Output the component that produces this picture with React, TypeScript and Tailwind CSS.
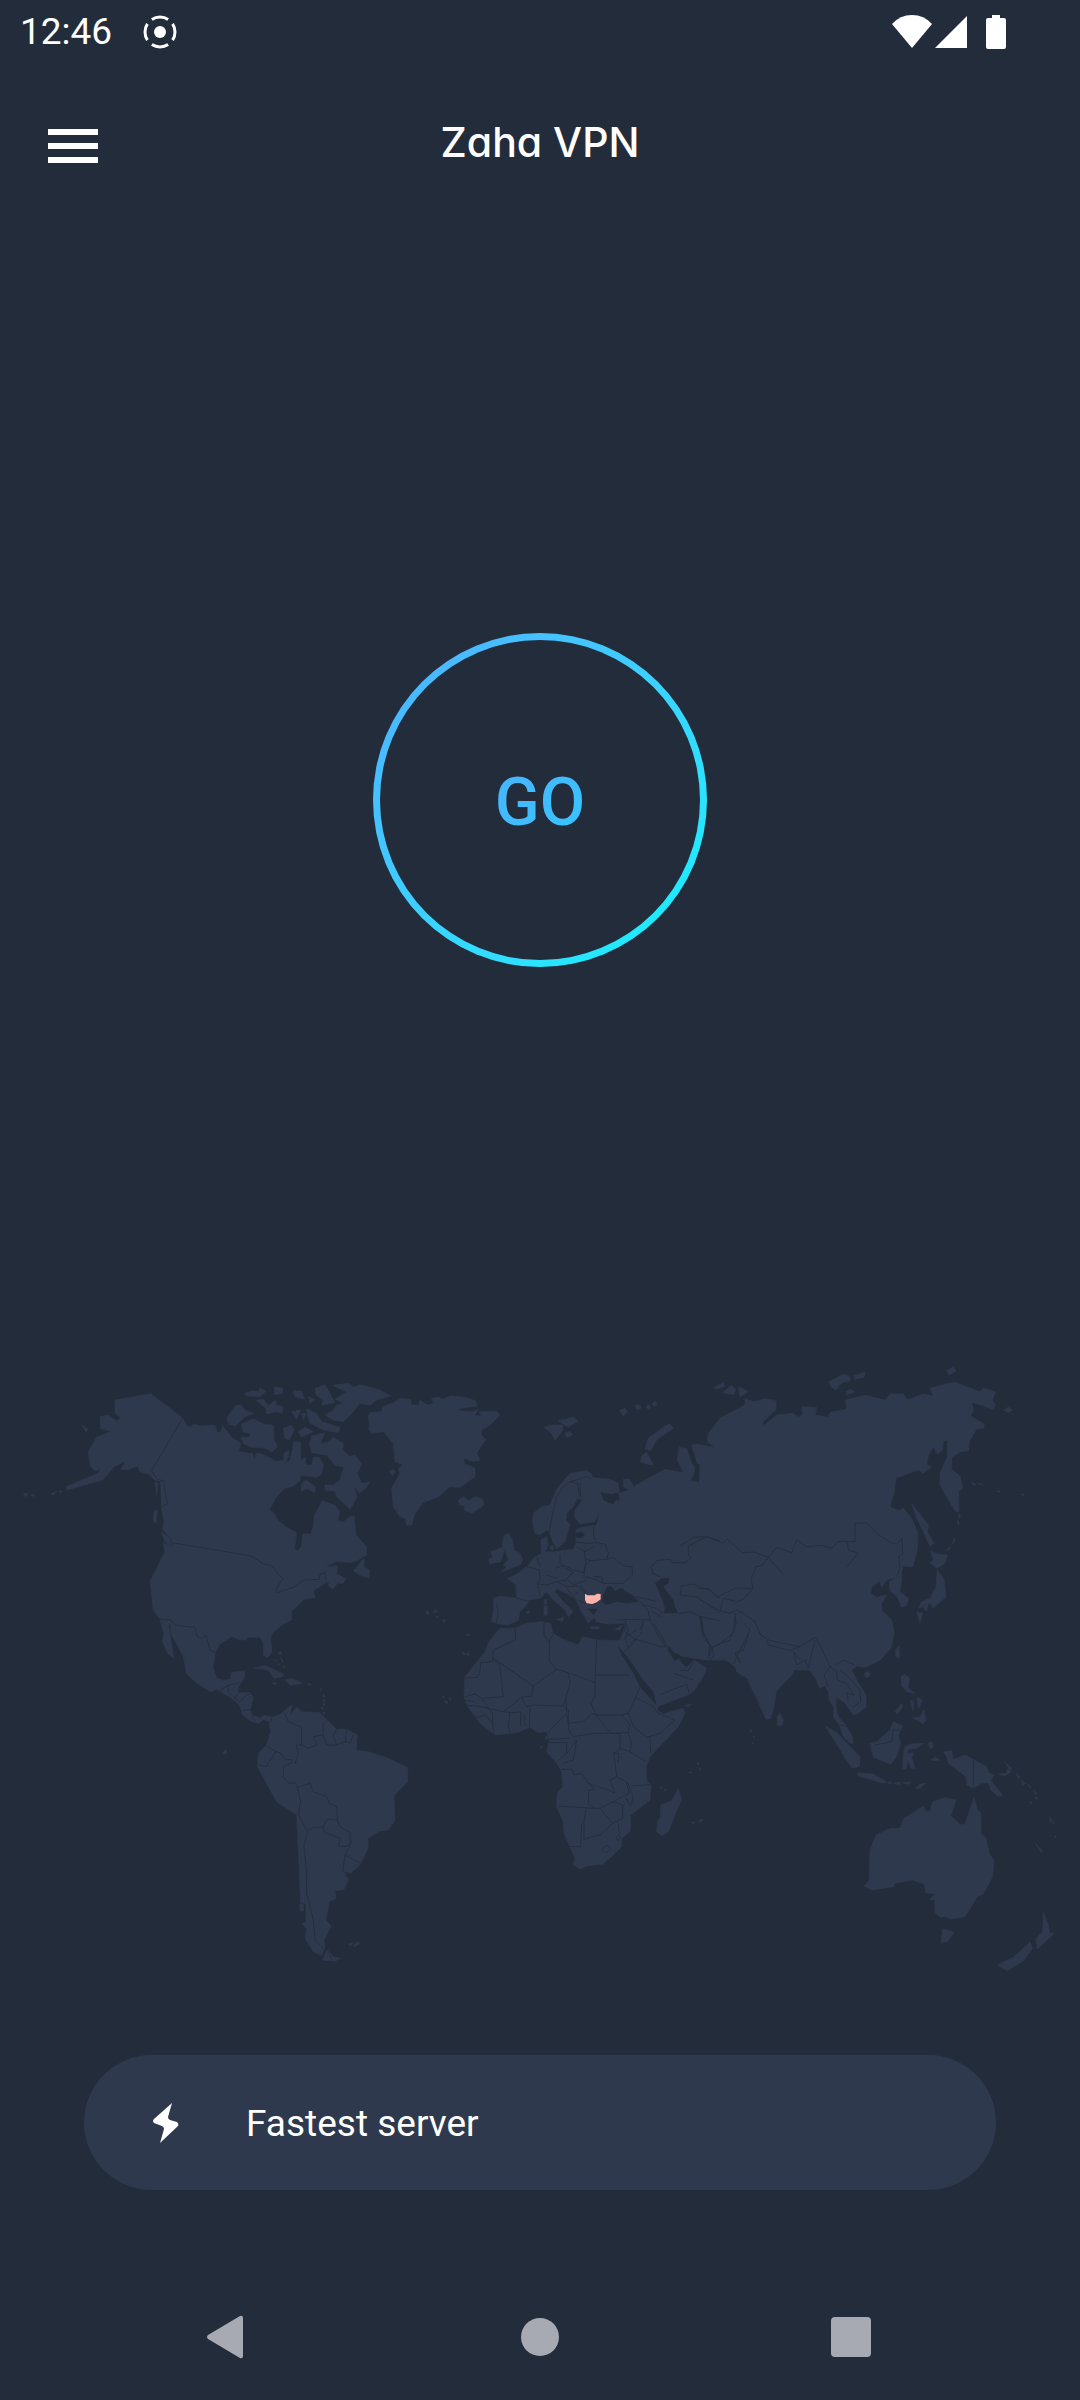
import React from "react";

interface MapRegion {
  id: string;
  x: number;
  y: number;
  land: string;
  seas?: string;
  borders?: string;
}

const LAND = "#2f394d";
const SEA = "#232c3b";

// Every region is drawn in its own local coordinates and then moved into place
const regions: MapRegion[] = [
  {
    id: "north-america",
    x: 0,
    y: 0,
    land: `M345,150 L452,131 L548,204 L562,230 L574,230 L580,222 L600,228 L645,226 L652,248 L662,246 L668,228 L695,262 L722,280 L716,304 L758,312 L762,330 L770,308 L790,314 L830,334 L850,330 L852,310 L866,302 L866,320 L854,344 L870,330 L882,276 L902,276 L902,330 L916,322 L918,345 L936,345 L940,322 L958,322 L970,345 L965,372 L950,382 L900,376 L900,392 L880,408 L855,415 L830,440 L808,478 L822,490 L835,512 L860,532 L890,548 L884,598 L894,602 L905,590 L908,552 L932,552 L940,530 L942,500 L966,452 L1005,466 L1018,484 L1014,512 L1030,516 L1050,500 L1062,498 L1068,555 L1100,592 L1100,615 L1070,632 L1055,638 L1010,634 L975,650 L1012,648 L1010,672 L1038,686 L1030,700 L1012,700 L998,718 L985,708 L988,698 L975,700 L940,722 L945,742 L912,748 L875,785 L875,810 L850,822 L818,848 L812,865 L815,905 L803,922 L790,915 L790,880 L782,862 L740,862 L738,870 L715,868 L695,860 L660,880 L645,905 L638,960 L558,960 L550,920 L515,850 L512,820 L505,822 L520,925 L505,910 L488,875 L492,850 L480,808 L470,795 L460,780 L450,695 L495,605 L490,580 L515,590 L515,568 L488,540 L492,510 L485,480 L482,395 L465,390 L445,372 L418,364 L414,348 L382,360 L362,358 L378,332 L340,352 L308,390 L200,420 L198,410 L295,370 L302,356 L285,362 L272,350 L264,305 L290,262 L335,244 L302,236 L300,200 L325,195 L350,214 L362,205 L345,188Z
      M724,222 L760,206 L795,224 L820,225 L822,270 L832,290 L815,306 L795,294 L755,292 L730,280 L722,262 L748,262 L752,252 L728,244Z
      M680,205 L705,168 L722,164 L735,180 L762,190 L735,200 L705,228 L685,222Z
      M735,130 L760,122 L775,126 L780,114 L798,124 L780,140 L740,138Z
      M822,112 L848,114 L848,130 L824,134Z
      M768,150 L790,148 L805,168 L825,150 L830,165 L850,170 L845,190 L830,185 L800,192 L798,175Z
      M880,122 L905,124 L914,148 L885,140Z M925,138 L944,150 L930,160Z
      M945,115 L975,104 L1005,158 L965,165 L970,150 L948,135Z
      M875,185 L902,180 L890,208Z M905,190 L918,192 L910,210Z
      M918,176 L950,190 L965,215 L1020,232 L1015,248 L970,240 L930,220Z
      M850,235 L875,226 L882,240 L868,270 L855,265Z
      M895,245 L915,232 L940,245 L905,262Z
      M998,106 L1045,100 L1060,112 L1080,104 L1140,120 L1172,138 L1130,150 L1110,166 L1080,160 L1060,185 L1030,215 L1000,210 L975,195 L1000,180 L1010,165 L1030,160 L1005,148 L1040,125Z
      M935,258 L975,248 L960,282 L985,275 L1000,262 L1030,280 L1028,300 L1050,320 L1065,315 L1085,342 L1072,370 L1085,400 L1108,396 L1100,412 L1078,430 L1060,408 L1072,440 L1050,478 L1010,440 L1005,424 L975,420 L975,405 L1000,405 L1020,390 L1032,352 L1005,345 L980,315 L935,308 L928,280Z
      M904,402 L918,390 L948,412 L944,428 L922,416 L904,424Z
      M1060,662 L1092,625 L1092,650 L1108,660 L1108,684 L1080,676Z
      M484,546 L510,565 L512,590 L495,575Z M462,485 L472,480 L468,520 L460,515Z M465,395 L475,400 L470,434Z
      M246,226 L264,238 L258,246Z M72,430h10v8h-10z M92,434l12,-2l-4,8z M152,432l18,-8l-12,12z M176,424h12l-8,6z`,
    borders: `M548,204 L455,362 L472,388 L490,392 L502,462 L485,470
      M515,578 L755,618 L790,642 L812,646 L848,686 L828,718 L832,728 L885,710 L912,690 L958,688 L960,672 L976,668 L978,700
      M478,808 L510,810 L530,826 L584,832 L592,860 L602,866 L618,856 L630,900 L645,908`,
  },
  {
    id: "europe",
    x: 1020,
    y: 0,
    land: `M128,170 L160,158 L180,146 L212,148 L215,165 L235,165 L240,150 L262,165 L280,160 L275,145 L295,142 L310,148 L330,138 L375,142 L405,152 L412,168 L360,175 L355,182 L400,185 L415,178 L405,195 L425,200 L418,185 L470,184 L480,195 L450,225 L425,240 L425,255 L438,270 L425,285 L410,310 L420,330 L400,335 L372,325 L372,340 L405,355 L405,380 L360,412 L330,410 L295,440 L250,458 L225,490 L215,525 L200,526 L195,505 L180,500 L160,470 L155,415 L180,370 L175,355 L190,345 L165,335 L160,280 L130,245 L95,250 L85,235 L95,220 L120,210 L90,200 L88,188 L125,185Z
      M85,195 L120,190 L118,240 L90,245Z
      M148,365 l10,-8 l8,8 l-8,12z
      M355,450 L372,440 L385,452 L405,440 L428,448 L432,465 L395,490 L372,480 L375,468 L358,464Z
      M612,232 L635,225 L668,225 L668,240 L645,272 L635,250Z M655,212 L700,202 L714,212 L685,232Z M675,250 L690,244 L698,254 L680,262Z
      M838,182 L855,175 L862,185 L850,198Z M884,168l10,-4l10,8l-10,8z M918,170l8,-6l6,8l-8,6z M936,160l10,-6l4,10l-8,6z
      M975,228 L990,222 L1000,235 L950,270 L932,302 L915,298 L925,265Z M905,318 L920,306 L940,345 L920,342 L902,335Z
      M490,560 L505,548 L518,570 L522,600 L540,610 L548,630 L540,645 L485,665 L500,650 L490,645 L505,630 L498,610 L488,590Z
      M452,605 L488,592 L492,605 L482,635 L450,642 L445,628 L458,620Z
      M580,490 L605,470 L630,465 L648,420 L690,370 L740,362 L755,372 L780,480 L765,515 L720,522 L703,500 L705,480 L728,450 L712,445 L700,470 L680,490 L678,510 L690,525 L675,575 L650,597 L640,580 L628,545 L620,540 L600,555 L585,550 L578,520Z
      M750,382 L810,388 L835,400 L838,425 L815,432 L780,425 L790,452 L820,465 L828,452 L840,450 L835,430 L870,420 L850,410 L850,388 L870,388 L880,410 L975,358 L1030,368 L1012,330 L1018,290 L1040,296 L1055,340 L1065,352 L1060,375 L1052,392 L1078,398 L1080,360 L1098,350 L1072,340 L1055,285 L1070,282 L1110,290 L1140,290 L1140,930 L1060,925 L1030,918 L985,885 L960,960 L870,960 L850,910 L835,885 L850,870 L855,820 L800,822 L770,815 L762,795 L775,775 L740,775 L765,800 L745,820 L722,780 L705,745 L650,715 L645,725 L665,750 L700,785 L685,800 L675,780 L640,750 L620,725 L600,745 L565,750 L560,765 L540,785 L535,810 L505,825 L480,822 L455,815 L462,775 L460,745 L480,738 L530,745 L528,705 L502,685 L525,675 L540,665 L565,645 L580,625 L605,610 L602,570 L620,560 L625,585 L615,605 L640,605 L700,598 L708,580 L708,540 L725,532 L770,525 L780,480Z
      M635,585 l8,6 l-6,12 l-8,-8z M752,830h24v6h-24z M650,808 L672,802 L668,815Z M612,768h10v28h-10z M613,748h7v14h-7z M825,838 L848,825 L840,840Z M558,786l8,-4l4,6l-8,4z
      M258,786l6,-4l4,6l-6,4z M282,782h10v5h-10z M288,798l6,2l-2,5z M308,808l10,4l-6,4z M380,852h8v5h-8z M366,904l10,8l-6,2z M380,910h8v5h-8z`,
    seas: `M790,735 L800,712 L812,708 L825,722 L845,715 L860,725 L885,740 L895,755 L860,760 L830,755 L800,765 L785,755Z
      M945,700 L965,685 L988,685 L985,700 L970,710 L1000,750 L1005,770 L1015,790 L1000,803 L970,795 L975,775 L965,745Z
      M708,548 L725,545 L735,555 L722,565 L708,562Z`,
    borders: `M628,545 L636,500 L650,440 L665,415 L690,395 L712,400 L720,440 M690,395 L710,390 L735,380 L752,385
      M720,400 L722,440 M762,528 L760,555 L768,578 M708,575 L740,580 L768,578 L795,582 L805,610 L800,628 L750,632 L735,625
      M710,590 L735,605 L760,590 M660,612 L660,640 L700,660 L730,668 L738,640 L732,600
      M750,632 L735,650 L732,680 M800,628 L820,622 L850,648 L876,650 L878,675 L850,700 L790,700 M735,680 L770,690 L790,700 L785,680 L760,680
      M645,655 L665,648 L700,668 L680,685 L700,705 L740,690 M600,650 L590,620 M560,650 L598,660 L600,690 L592,702 L620,705 L650,695 L680,690
      M592,702 L600,735 M530,745 L562,752 M470,760 L475,790 L468,818 M650,695 L680,710 L715,708 L735,730 M680,715 L700,740 L712,725 M715,750 L735,760 L770,762
      M720,705 L740,730 M620,675 L650,685
      M830,810 L880,808 L930,810 L925,785 L890,740 L950,755 M912,765 L950,775 L970,790 M930,810 L950,850 L978,890 M855,820 L855,845 L890,870 M910,812 L905,850 L870,880 M935,785 L965,800
      M1140,572 L1100,560 L1045,588 L1045,612 L1052,625 L1035,638 L995,638 L990,628 L950,632 L935,650 L938,670 L960,680
      M1020,735 L1025,708 L1060,702 L1085,715 L1108,718 L1140,745 M1018,790 L1050,785 L1082,800 L1140,812 M1020,735 L1070,740 L1140,790 M1082,800 L1088,860 L1110,885 L1105,920`,
  },
  {
    id: "asia",
    x: 2100,
    y: 0,
    land: `M0,290 L20,296 L45,290 L22,275 L25,250 L60,205 L135,165 L135,145 L160,155 L195,146 L228,152 L228,178 L188,218 L190,228 L230,195 L280,190 L295,202 L308,194 L305,170 L350,172 L345,195 L385,202 L392,186 L440,178 L437,150 L495,136 L555,150 L570,132 L610,132 L622,150 L670,132 L700,138 L690,115 L762,96 L840,125 L850,115 L888,125 L876,150 L886,165 L880,178 L815,156 L820,180 L812,198 L852,222 L852,234 L830,236 L808,275 L805,302 L782,305 L755,322 L755,358 L780,378 L788,415 L776,425 L777,485 L765,484 L720,405 L720,370 L742,320 L742,272 L730,272 L728,300 L712,312 L700,290 L685,315 L680,345 L695,350 L670,370 L655,360 L588,384 L582,430 L570,470 L595,482 L610,474 L635,505 L654,550 L652,600 L638,650 L610,648 L605,665 L605,690 L600,725 L625,745 L622,765 L605,772 L592,740 L570,722 L568,695 L590,680 L562,690 L545,712 L538,692 L515,712 L512,730 L530,742 L560,735 L545,760 L545,780 L575,810 L582,850 L572,895 L540,930 L495,952 L490,945 L470,945 L450,960 L115,960 L80,930 L0,925Z
      M636,462 L685,525 L682,545 L702,580 L690,590 L668,540 L650,505Z
      M692,602 L712,612 L742,615 L735,640 L712,655 L690,640 L700,630Z
      M712,660 L732,690 L738,740 L700,775 L690,760 L655,775 L665,755 L690,745 L708,710Z
      M650,785 L668,790 L660,818Z M668,772 L685,762 L680,782Z
      M388,95 L430,72 L450,80 L450,92 L425,98 L408,120 L392,110Z M462,78 L495,66 L492,82 L465,88Z M438,125 L450,118 L464,126 L440,134Z
      M740,62 L760,50 L768,62 L748,75Z M42,112 L70,98 L75,108 L50,118Z M68,128 L95,105 L108,120 L100,134Z M115,110 L145,125 L120,140Z
      M910,180l15,-8l12,8l-12,8z M814,396l14,8l-6,2z M834,400l12,2v4z M892,424l8,-2v5z M962,432h8v7z M776,492l6,4l-6,10z M770,512h6v14z M762,566l4,4l-10,14z M738,604l12,-14l2,6z
      M586,900 L597,890 L598,925 L588,920Z`,
    borders: `M-60,588 L-20,562 L20,560 L68,580 L82,568 L128,608 L162,606 L205,622 L230,592 L275,608 L290,570 L320,590 L365,586 L395,595 L415,575 L465,575 L465,520 L500,518 L530,550 L572,578 L592,582 L606,565 L608,612 L596,620 L600,655 L590,680
      M205,622 L185,648 L168,650 L152,690 L160,715 L130,748 M205,622 L250,675 M440,650 L475,610 L445,600 L442,578
      M0,716 L25,716 L50,742 L105,715 L160,715 M0,750 L60,782 L70,745 L110,755 L130,748 M60,782 L90,790 L110,780 L130,790 M105,790 L108,820 L90,870 L35,892 L5,840 L0,800
      M130,790 L165,815 L182,855 L210,872 L300,890 L345,862 L360,885 L372,910 L390,950 M132,820 L150,840 L130,900 L105,910 L120,940
      M200,870 L205,885 L270,902 L300,890 M280,905 L300,930 M35,892 L42,915 L30,930`,
  },
  {
    id: "south-america",
    x: 360,
    y: 810,
    land: `M120,0 L500,0 L455,40 L450,60 L456,95 L443,112 L430,105 L430,70 L420,50 L380,50 L378,60 L335,50 L300,72 L285,98 L278,140 L290,175 L310,182 L330,178 L335,158 L375,152 L372,175 L355,200 L355,218 L390,218 L400,232 L390,270 L398,285 L420,295 L432,285 L455,292 L450,305 L430,298 L418,310 L395,305 L368,285 L358,255 L335,235 L290,208 L272,215 L230,190 L198,158 L197,115 L155,45 L152,12 L145,12 L160,112 L145,102 L128,65 L132,40Z
      M455,292 L478,285 L515,255 L510,285 L530,262 L545,275 L598,278 L622,300 L650,328 L680,328 L712,345 L708,390 L745,395 L805,415 L863,443 L863,485 L822,527 L825,600 L805,630 L780,632 L744,655 L744,685 L720,735 L692,760 L672,760 L686,778 L672,808 L645,812 L648,835 L628,845 L618,900 L633,918 L612,962 L615,980 L605,1006 L580,995 L555,955 L560,925 L545,912 L558,905 L558,852 L542,848 L530,585 L470,545 L412,440 L415,400 L440,375 L452,335 L448,310Z
      M622,988 L640,1012 L662,1015 L645,1023 L607,1020Z M540,852h10v20h-10z M684,972l16,-4l-8,10z M700,976l16,-12l2,8l-14,8z
      M402,145 L435,136 L490,162 L488,170 L462,175 L445,150Z M495,180 L515,175 L548,190 L510,196Z M455,190l14,-2v6z M560,190l14,2l-4,5z
      M474,98l10,-4l-2,10z M482,114l8,8l-4,4z M464,120h5v5z M490,136l6,6h-6z M472,132h6v5z M600,206h5v5h-5z M609,224h5v6h-5z M610,238h5v6h-5z M609,250h5v6h-5z M604,262h5v5h-5z M608,275l8,4l-6,6z M310,396l8,-8l2,10l-8,6z
      M966,228h6v6z M974,242l10,4l-4,6z M986,236h6v5z`,
    borders: `M300,212 L325,195 L355,190 M325,195 L325,215 L345,235 L360,245 M355,218 L345,235 M360,245 L380,225 L392,222 M370,270 L392,270 M398,285 L402,302 M455,292 L452,305
      M495,282 L505,305 L545,322 L545,375 L528,375 L535,400 L525,432 M545,375 L565,385 L590,375 L582,350 L608,345 L610,310 L620,302 M610,345 L620,375 L650,375 L640,345 L650,328 M680,330 L675,365 L690,370 L700,345 M650,375 L675,365
      M440,378 L468,395 L438,440 L415,435 M468,395 L480,398 L495,418 L520,420 M520,425 L490,440 L490,470 L505,490 L525,488 L532,502 L570,490 L580,515 L620,530 L628,550 L650,560 L652,600
      M532,502 L542,545 L535,582 L562,635 L580,622 L608,622 L622,598 L652,600 L658,618 L690,638 L690,668 L680,680 L655,678 L660,655 L615,638 L608,622
      M562,635 L552,680 L560,760 L560,820 L580,900 L585,960 L608,985 M697,660 L675,705 L720,730 M675,705 L668,755 L690,760 M622,988 L636,1020`,
  },
  {
    id: "africa",
    x: 1260,
    y: 690,
    land: `M205,190 L218,170 L240,145 L285,145 L320,130 L365,125 L392,130 L398,160 L430,178 L475,195 L488,170 L530,180 L590,182 L600,180 L612,150 L615,120 L700,100 L990,100 L990,300 L965,285 L950,270 L945,255 L915,240 L865,240 L825,232 L790,230 L760,215 L745,195 L742,210 L765,245 L775,235 L785,250 L800,262 L812,250 L822,240 L860,265 L825,330 L805,345 L715,378 L712,390 L730,402 L790,385 L795,400 L775,440 L690,530 L678,560 L680,600 L692,615 L690,660 L632,705 L630,755 L605,775 L605,800 L550,852 L500,858 L480,867 L460,855 L465,835 L432,760 L430,725 L410,680 L412,640 L428,620 L425,575 L410,550 L380,515 L388,480 L380,455 L355,458 L330,442 L290,458 L225,465 L180,430 L140,375 L132,350 L135,290 L195,215Z
      M775,626 L785,660 L768,695 L745,755 L725,767 L710,755 L712,725 L722,710 L722,675 L755,662Z
      M795,376l22,-4l-14,10z M720,620l8,2l-4,6z M732,626l8,6l-6,2z M806,576h8v5z M830,548l8,2l-4,6z M836,566h7v6z M814,728l12,-2l-6,7z M836,722l8,-6l5,5l-8,5z M376,470l8,2l-6,7z M360,502l6,-4v8z`,
    seas: `M592,198 L605,210 L640,255 L665,295 L700,335 L710,375 L690,355 L660,320 L640,280 L605,225Z`,
    borders: `M285,145 L287,180 L220,210 L218,245 L182,248 L180,275 L172,292 L135,294 M220,235 L340,318 L410,268 L388,245 L388,185 L372,165 L372,130 M388,185 L398,165
      M220,235 L240,258 L250,350 L185,355 L165,342 L135,350 M340,318 L335,348 L305,352 L250,395 M410,268 L445,278 L450,310 L438,350 L430,378 L340,375 L320,380 L305,352 M445,278 L525,308 L530,180 M530,285 L630,285
      M525,308 L525,350 L512,370 L530,405 L600,405 L625,400 L650,345 L660,320 M430,378 L445,390 L445,430 L490,425 L515,400 L530,405 L560,450 L580,460 L625,458 L630,435 L605,405 M445,430 L448,455 L460,470 L520,460 L600,460
      M438,350 L440,400 L400,440 L385,458 M440,400 L445,430 M185,355 L205,385 L250,395 L270,398 L265,440 L270,458 M270,398 L302,396 L302,440 M312,400 L316,440 M330,380 L328,440 M205,385 L218,400 L218,430 L222,465 M135,375 L185,380 L205,385 M133,362 L165,364 M165,415 L195,405 L218,430
      M388,488 L440,488 L440,520 L412,545 M388,478 L450,475 M440,520 L470,480 L460,540 L430,550 M425,568 L455,568 L462,585 L485,580 L505,610 L525,628 L505,632 L505,670 L520,685 L415,678
      M505,610 L570,632 L585,640 L570,600 L590,590 L582,520 L600,505 L600,465 M580,520 L596,520 L594,548 M600,505 L630,515 L635,490 L625,460 M630,515 L678,545 M690,470 L692,520 M625,400 L640,440 L680,472 L720,460 L765,420 L715,400 L700,380 L650,355
      M590,590 L618,605 L628,640 L580,665 L540,685 L520,685 M635,618 L688,614 M622,605 L640,650 L632,678 L618,655 M580,665 L608,675 L608,715 L578,730 L540,685 M578,730 L540,765 L515,770 L492,780 L492,725 L498,685 M485,730 L482,800 L450,800 M595,730 L598,765 M545,808 L560,796 L572,806 L558,820Z M588,772 l8,-6 l6,8 l-8,8z
      M605,225 L625,205 L615,175 L625,150 L615,120 M625,205 L650,178 L720,200 L742,200 M650,150 L620,170 M670,120 L660,150 M740,195 L700,130 M780,270 L805,272 L820,245 M760,280 L820,300 M800,312 L780,320 L720,345 M800,312 L808,340 M845,110 L850,160 L875,205 L865,235 M945,110 L940,160 L900,190 L875,205 M985,160 L940,250`,
  },
  {
    id: "oceania",
    x: 2100,
    y: 810,
    land: `M0,0 L0,118 L75,118 L105,135 L110,155 L125,165 L145,150 L145,185 L170,235 L198,298 L212,295 L222,260 L228,215 L280,160 L283,145 L318,145 L330,152 L350,180 L358,205 L375,198 L385,215 L388,240 L402,262 L400,290 L420,320 L430,350 L450,370 L460,370 L455,345 L435,312 L415,290 L410,270 L412,232 L435,250 L460,285 L475,280 L498,260 L498,225 L470,180 L455,150 L470,138 L495,142 L540,120 L572,85 L582,40 L575,0Z
      M0,140 L18,150 L0,188Z
      M232,290 L240,280 L250,300 L245,318 L232,315Z M376,318 L410,338 L480,410 L478,440 L455,444 L430,405Z M472,458 L520,462 L560,485 L550,490 L475,468Z
      M510,370 L530,365 L570,330 L580,305 L608,318 L595,345 L602,370 L590,410 L572,432 L520,412Z
      M610,400 L615,380 L630,372 L672,370 L650,385 L625,388 L622,402 L642,398 L635,412 L645,445 L632,445 L625,420 L618,448 L608,445Z
      M730,395 L755,392 L760,418 L795,405 L860,440 L865,458 L882,465 L872,482 L908,525 L895,530 L872,510 L865,488 L845,490 L820,505 L800,495 L798,470 L760,440 L745,430 L740,410Z
      M603,170 L615,163 L628,175 L625,205 L645,220 L620,215 L605,195Z M638,295 L660,290 L672,270 L678,300 L668,312 L655,300Z M585,275 L605,250 L608,262 L592,282Z M630,240 L642,245 L640,272Z M652,232l14,8l-8,24l-6,-10z
      M494,160l8,-6l9,6l-6,12l-10,-2z M648,505 L660,492 L678,490 L655,507Z M562,488l12,-2v6z M580,490l20,-4v8z M606,488l26,-2l-6,7z M684,368l12,-2l4,14l-10,6z M692,420l14,-8l14,8l-20,2z
      M895,462 L918,460 L925,445 L932,455 L915,468Z M912,425l24,20l-4,4z M948,458l12,14l-6,2z M964,480l12,12l-8,4z M984,492l10,10l-4,3z M1002,512l8,10l-4,2z M1006,528l8,8l-6,2z M988,546h7v6z M1050,590l6,12l-5,2z M1058,602l6,8h-6z M1062,648h6v6z
      M510,690 L528,645 L572,625 L600,625 L612,595 L672,558 L675,572 L690,575 L698,545 L735,533 L768,540 L752,588 L782,614 L795,612 L822,533 L832,570 L843,578 L843,640 L858,655 L868,700 L882,722 L878,770 L850,822 L832,830 L795,890 L752,897 L738,890 L722,892 L705,878 L705,840 L690,838 L705,822 L678,818 L672,792 L638,780 L585,790 L580,800 L515,810 L492,798 L508,782Z
      M728,926 L762,936 L742,966 L723,967Z M1030,877 L1045,915 L1048,938 L1063,940 L1012,987 L1008,955 L1028,935Z M990,966 L998,985 L970,1022 L922,1052 L892,1035 L940,1012Z M1005,670 L1028,692 L1024,697Z
      M150,330l6,2l-4,5z M158,348h6v6z M155,368h6v5z`,
    borders: `M280,95 L290,135 L315,120 L325,145 L345,60 M390,140 L372,165 L385,200 M390,140 L410,155 L412,180 L440,190 L462,225 L440,218 M405,135 L430,120 L465,135 M420,150 L445,170 L480,210 L482,245 L460,262 M440,218 L445,240 M408,232 L410,262 M412,312 L440,320 M525,375 L575,365 L580,330 L600,330 M820,420 L820,505 M105,100 L125,130`,
  },
];

const WorldMap = () => {
  return (
    <svg
      viewBox="0 0 3240 1920"
      className="block h-auto w-full"
      role="img"
      aria-label="World map"
    >
      {regions.map((region) => (
        <g key={region.id} transform={`translate(${region.x} ${region.y})`}>
          <path
            d={region.land}
            fill={LAND}
            stroke={LAND}
            strokeWidth="2"
            strokeLinejoin="round"
          />
          {region.seas && <path d={region.seas} fill={SEA} />}
        </g>
      ))}
      {/* Country borders go above all the land */}
      {regions.map((region) => (
        <g key={region.id} transform={`translate(${region.x} ${region.y})`}>
          <path
            d={region.borders}
            fill="none"
            stroke={SEA}
            strokeOpacity="0.8"
            strokeWidth="3"
            strokeLinejoin="round"
          />
        </g>
      ))}
      {/* Current location */}
      <path
        d="M1755,731 L1762,736 L1784,736 L1791,731 L1802,732 L1802,748 L1790,757 L1777,762 L1760,760 L1755,750Z"
        fill="#ffb4ab"
      />
    </svg>
  );
};

const StatusBar = () => {
  return (
    <div className="flex h-16 items-center justify-between pl-5 pr-[74px] text-white">
      <div className="flex items-center gap-[31px]">
        <span className="text-[37px] leading-[44px]">12:46</span>
        <svg width="34" height="34" viewBox="0 0 34 34" fill="none">
          <circle cx="17" cy="17" r="6" fill="currentColor" />
          <circle
            cx="17"
            cy="17"
            r="15"
            stroke="currentColor"
            strokeWidth="3"
            pathLength="360"
            strokeDasharray="66 24"
            strokeDashoffset="33"
          />
        </svg>
      </div>
      <div className="flex items-center">
        <svg width="40" height="34" viewBox="0 0 40 34" fill="currentColor">
          <path d="M20,33 L0,9 Q8,0 20,0 Q32,0 40,9Z" />
        </svg>
        <svg width="36" height="34" viewBox="0 0 36 34" fill="currentColor">
          <path d="M3,33 L35,1 V33Z" />
        </svg>
        <svg
          className="ml-[18px]"
          width="20"
          height="34"
          viewBox="0 0 20 34"
          fill="currentColor"
        >
          <path d="M6,0 H14 V3 H18 Q20,3 20,5 V32 Q20,34 18,34 H2 Q0,34 0,32 V5 Q0,3 2,3 H6Z" />
        </svg>
      </div>
    </div>
  );
};

const Header = () => {
  return (
    <header className="grid h-[164px] grid-cols-[1fr_auto_1fr] items-center px-12 text-white">
      <button type="button" aria-label="Open menu" className="w-[50px]">
        <svg width="50" height="34" viewBox="0 0 50 34" fill="currentColor">
          <path d="M0,0H50V6H0Z M0,14H50V20H0Z M0,28H50V34H0Z" />
        </svg>
      </button>
      <h1 className="pb-2 font-[Inter,sans-serif] text-[41px] font-medium leading-[48px] [font-feature-settings:'cv11']">
        Zaha VPN
      </h1>
    </header>
  );
};

const NavigationBar = () => {
  return (
    <nav className="mt-[84px] flex h-[126px] items-center justify-between px-[185px] text-[#a7aab2]">
      <button type="button" aria-label="Back" className="flex w-22 justify-center">
        <svg width="44" height="44" viewBox="0 0 44 44" fill="currentColor">
          <path d="M1,20 L33,1 Q36,0 36,3 V41 Q36,44 33,43 L1,24 Q-1,22 1,20Z" />
        </svg>
      </button>
      <button type="button" aria-label="Home" className="flex w-22 justify-center">
        <span className="size-[38px] rounded-full bg-current" />
      </button>
      <button type="button" aria-label="Recent apps" className="flex w-22 justify-center">
        <span className="size-10 rounded-sm bg-current" />
      </button>
    </nav>
  );
};

const App = () => {
  return (
    <div className="flex min-h-screen flex-col bg-[#232c3b] font-[Roboto,sans-serif]">
      <StatusBar />
      <Header />

      <main className="flex flex-1 flex-col">
        <div className="flex flex-1 items-center justify-center pt-[22px]">
          <button
            type="button"
            className="size-[334px] rounded-full bg-linear-to-br from-[#4eafff] to-[#00f4ff] p-[7px]"
          >
            <span className="flex size-full items-center justify-center rounded-full bg-[#232c3b] pt-1.5">
              <span className="bg-linear-to-br from-[#47b4ff] to-[#36c5ff] bg-clip-text text-[66px] font-medium leading-[76px] text-transparent">
                GO
              </span>
            </span>
          </button>
        </div>

        <WorldMap />

        <button
          type="button"
          className="mx-[84px] mt-[65px] flex h-[135px] items-center rounded-full bg-[#2f394d] pl-[69px] text-white"
        >
          <svg width="26" height="40" viewBox="0 0 26 40" fill="currentColor">
            <path d="M19,0 L15,14 Q15,16 17,17 L24,19 Q26,21 25,23 L7,40 L11,26 Q11,24 9,23 L1,20 Q-1,18 1,16Z" />
          </svg>
          <span className="ml-[67px] pt-0.5 text-[37px] leading-[44px]">
            Fastest server
          </span>
        </button>
      </main>

      <NavigationBar />
    </div>
  );
};

export default App;
